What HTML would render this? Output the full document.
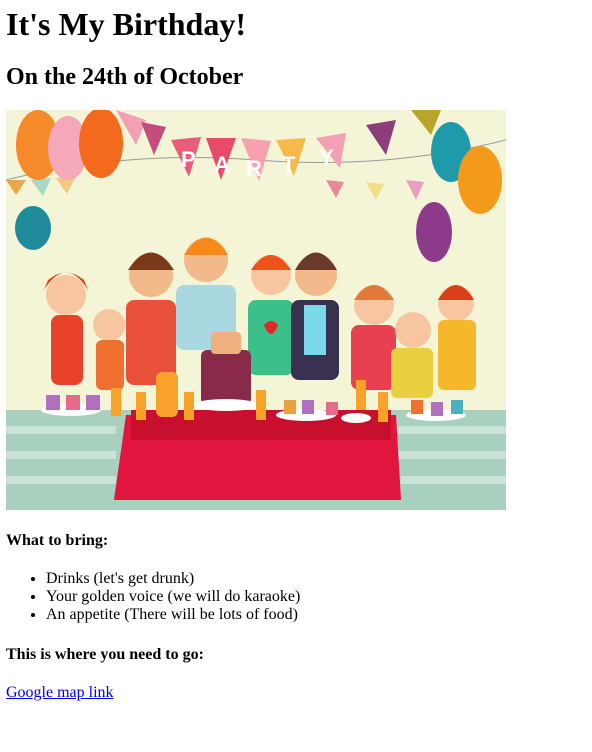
<!DOCTYPE html>
<html><head><meta charset="utf-8"><style>
body{margin:0;padding:0 0 0 6px;font-family:"Liberation Serif",serif;color:#000;background:#fff;width:586px;height:746px;overflow:hidden}
h1{font-size:32px;margin:6px 0 0;line-height:37px}
h2{font-size:24px;margin:20px 0 0;line-height:28px}
svg{display:block;margin-top:19px}
h4{font-size:16px;margin:22px 0 0;line-height:18px}
ul{margin:20px 0 0;padding-left:40px;font-size:16px;line-height:18px}
p{margin:20px 0 0;font-size:16px;line-height:18px}
a{color:#00e}
</style></head><body>
<h1>It's My Birthday!</h1>
<h2>On the 24th of October</h2>
<svg width="500" height="400" viewBox="0 0 500 400">
<rect width="500" height="400" fill="#f4f4d6"/>
<path d="M0 70 Q120 40 250 50 T500 30" stroke="#999" fill="none"/>
<g fill="#f3a0b4"><path d="M110 0l30 10-10 25z"/><path d="M135 12l25 5-12 28z" fill="#c64c7e"/><path d="M165 30l30 -3-12 40z" fill="#e95d7a"/><path d="M200 28l30 0-15 42z" fill="#e84a6a"/><path d="M235 28l30 3-12 40z" fill="#f7a0b0"/><path d="M270 30l30 -2-12 38z" fill="#f7b94a"/><path d="M310 28l30-5-6 35z" fill="#f3a0b4"/><path d="M360 15l30-5-10 35z" fill="#8c3e7a"/><path d="M405 0l30 0-10 25z" fill="#b8a52a"/></g>
<g fill="#e9a74a"><path d="M0 70l20 0-10 15z"/><path d="M25 70l20 -2-8 18z" fill="#a6d9c8"/><path d="M50 68l20 -2-9 18z" fill="#f4c880"/><path d="M320 70l18 2-8 16z" fill="#e98a9a"/><path d="M360 72l18 2-8 16z" fill="#f0e08a"/><path d="M400 70l18 2-8 18z" fill="#e9a0c0"/></g>
<ellipse cx="32" cy="35" rx="22" ry="35" fill="#f48a2a"/><ellipse cx="62" cy="38" rx="20" ry="32" fill="#f4a8b8"/><ellipse cx="95" cy="33" rx="22" ry="35" fill="#f36a1e"/>
<ellipse cx="27" cy="118" rx="18" ry="22" fill="#1e8a9a"/><ellipse cx="445" cy="42" rx="20" ry="30" fill="#1e9aaa"/><ellipse cx="474" cy="70" rx="22" ry="34" fill="#f49a1a"/><ellipse cx="428" cy="122" rx="18" ry="30" fill="#8e3a8a"/>
<path d="M0 300 H500 V400 H0z" fill="#a9cfbf"/>
<g stroke="#c9e3d6" stroke-width="8" fill="none"><path d="M0 320 H110"/><path d="M0 345 H110"/><path d="M0 370 H110"/><path d="M390 320 H500"/><path d="M390 345 H500"/><path d="M390 370 H500"/></g>
<path d="M120 305 H390 L395 390 H108z" fill="#e0163e"/>
<path d="M125 300 H385 V330 H125z" fill="#c8102e"/>
<g>
<circle cx="60" cy="185" r="20" fill="#f7c6a0"/><path d="M38 180 Q60 145 82 180 L78 170 Q60 155 42 170z" fill="#d54a1e"/><rect x="45" y="205" width="32" height="70" rx="8" fill="#e8432a"/>
<circle cx="103" cy="215" r="16" fill="#f7c6a0"/><rect x="90" y="230" width="28" height="50" rx="6" fill="#f07030"/>
<circle cx="145" cy="165" r="22" fill="#f2b98a"/><path d="M122 160 Q145 125 168 160z" fill="#7a3a1a"/><rect x="120" y="190" width="50" height="85" rx="8" fill="#e8503a"/>
<circle cx="200" cy="150" r="22" fill="#f2b98a"/><path d="M178 145 Q200 110 222 145z" fill="#f58a1a"/><rect x="170" y="175" width="60" height="65" rx="8" fill="#a9d8e0"/>
<circle cx="265" cy="165" r="20" fill="#f7c6a0"/><path d="M245 160 Q265 130 285 160z" fill="#f0501a"/><rect x="242" y="190" width="46" height="75" rx="8" fill="#3cc08a"/><path d="M258 215 q7-8 14 0 q-7 18-14 0" fill="#e02a2a"/>
<circle cx="310" cy="165" r="21" fill="#f2b98a"/><path d="M289 160 Q310 125 331 160z" fill="#6a3a2a"/><rect x="285" y="190" width="48" height="80" rx="8" fill="#3a3050"/><rect x="298" y="195" width="22" height="50" fill="#7ad8e8"/>
<circle cx="368" cy="195" r="20" fill="#f7c6a0"/><path d="M348 190 Q368 160 388 190z" fill="#e07a3a"/><rect x="345" y="215" width="45" height="65" rx="8" fill="#e84050"/>
<circle cx="407" cy="220" r="18" fill="#f7c6a0"/><rect x="385" y="238" width="42" height="50" rx="6" fill="#e8d040"/>
<circle cx="450" cy="193" r="18" fill="#f7c6a0"/><path d="M432 190 Q450 160 468 190z" fill="#d8401a"/><rect x="432" y="210" width="38" height="70" rx="6" fill="#f4b82a"/>
</g>
<rect x="195" y="240" width="50" height="55" rx="6" fill="#8a2a4a"/><rect x="205" y="222" width="30" height="22" rx="4" fill="#f0b080"/>
<ellipse cx="220" cy="295" rx="32" ry="6" fill="#fff"/>
<g fill="#f7a22a"><rect x="105" y="278" width="10" height="28"/><rect x="130" y="282" width="10" height="28"/><rect x="150" y="262" width="22" height="45" rx="6"/><rect x="178" y="282" width="10" height="28"/><rect x="250" y="280" width="10" height="30"/><rect x="350" y="270" width="10" height="30"/><rect x="372" y="282" width="10" height="30"/></g>
<g fill="#fff"><ellipse cx="65" cy="300" rx="30" ry="6"/><ellipse cx="300" cy="305" rx="30" ry="6"/><ellipse cx="350" cy="308" rx="15" ry="5"/><ellipse cx="430" cy="305" rx="30" ry="6"/></g>
<g fill="#b070c0"><rect x="40" y="285" width="14" height="15"/><rect x="60" y="285" width="14" height="15" fill="#e86a8a"/><rect x="80" y="285" width="14" height="15"/><rect x="278" y="290" width="12" height="14" fill="#e8a040"/><rect x="296" y="290" width="12" height="14"/><rect x="320" y="292" width="12" height="13" fill="#e86a8a"/><rect x="405" y="290" width="12" height="14" fill="#f07030"/><rect x="425" y="292" width="12" height="14"/><rect x="445" y="290" width="12" height="14" fill="#4ab0c0"/></g>
<g fill="#fff" font-family="Liberation Sans,sans-serif" font-weight="bold" font-size="22"><text x="175" y="57">P</text><text x="208" y="62">A</text><text x="240" y="66">R</text><text x="276" y="62">T</text><text x="313" y="55">Y</text></g>
</svg>
<h4>What to bring:</h4>
<ul><li>Drinks (let's get drunk)</li><li>Your golden voice (we will do karaoke)</li><li>An appetite (There will be lots of food)</li></ul>
<h4>This is where you need to go:</h4>
<p><a href="#">Google map link</a></p>
</body></html>
